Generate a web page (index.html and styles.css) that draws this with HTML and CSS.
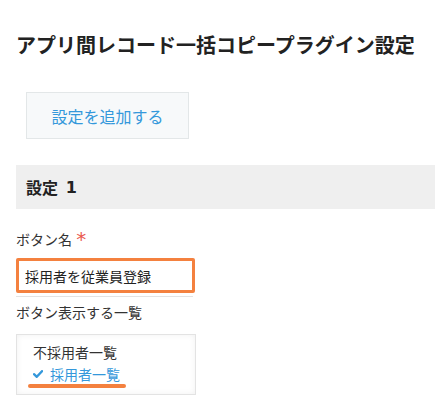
FILE: index.html
```html
<!DOCTYPE html>
<html lang="ja">
<head>
<meta charset="utf-8">
<link rel="stylesheet" href="styles.css">
</head>
<body>
<div class="page">
  <h1 class="title">アプリ間レコード一括コピープラグイン設定</h1>
  <button class="add-btn" type="button">設定を追加する</button>
  <div class="section-head">設定 <span class="num">1</span></div>
  <div class="field-label">ボタン名 <span class="req">*</span></div>
  <div class="input-wrap">
    <div class="input-box">採用者を従業員登録</div>
  </div>
  <div class="field-label label2">ボタン表示する一覧</div>
  <div class="list-box">
    <div class="list-item">不採用者一覧</div>
    <div class="list-item selected">
      <svg class="check" width="10" height="8" viewBox="0 0 10 8"><path d="M1 4.2 L3.8 6.8 L9 1.2" fill="none" stroke="#3498db" stroke-width="2.4" stroke-linecap="round" stroke-linejoin="round"/></svg>
      <span>採用者一覧</span>
    </div>
    <div class="mark-line"></div>
  </div>
</div>
</body>
</html>
```

FILE: styles.css
```css
html, body {
  margin: 0;
  padding: 0;
  background: #fff;
}
body {
  font-family: "Noto Sans CJK JP", "Noto Sans", sans-serif;
  color: #333;
}
.page {
  padding-left: 16px;
}
.title {
  margin: 31px 0 0 0;
  font-size: 20px;
  line-height: 28px;
  font-weight: bold;
  color: #222;
  white-space: nowrap;
}
.add-btn {
  display: block;
  margin: 33px 0 0 10px;
  width: 163px;
  height: 47px;
  background: #f7f9fa;
  border: 1px solid #e3e7e8;
  color: #3498db;
  font-family: inherit;
  font-size: 16px;
  padding: 0;
  box-sizing: border-box;
}
.section-head {
  margin-top: 26px;
  height: 44px;
  background: #efefef;
  padding-left: 10px;
  display: flex;
  align-items: center;
  font-size: 16px;
  font-weight: bold;
  color: #222;
  white-space: pre;
}
.section-head .num {
  font-family: "DejaVu Sans", sans-serif;
  margin-left: 4px;
}
.field-label {
  margin-top: 19px;
  font-size: 14px;
  line-height: 20px;
  height: 20px;
  color: #333;
}
.req {
  font-family: "DejaVu Sans", sans-serif;
  color: #ea5a4e;
  font-size: 20px;
  line-height: 20px;
  position: relative;
  top: 1px;
  margin-left: 1px;
}
.input-wrap {
  margin-top: 10px;
  width: 177px;
  border-bottom: 1px solid #e3e3e3;
  padding-bottom: 3px;
}
.input-box {
  width: 179px;
  height: 35px;
  box-sizing: border-box;
  border: 3px solid #f4813f;
  border-radius: 2px;
  padding-left: 6px;
  display: flex;
  align-items: center;
  font-size: 14px;
  color: #222;
}
.label2 {
  margin-top: 5px;
}
.list-box {
  position: relative;
  margin-top: 12px;
  width: 180px;
  height: 61px;
  box-sizing: border-box;
  border: 1px solid #e3e3e3;
  box-shadow: inset 0 0 6px rgba(0, 0, 0, 0.06);
  padding: 6px 0 0 16px;
}
.list-item {
  font-size: 14px;
  line-height: 22px;
  color: #333;
  display: flex;
  align-items: center;
}
.list-item.selected {
  color: #3498db;
}
.check {
  margin-right: 7px;
}
.mark-line {
  position: absolute;
  left: 11px;
  top: 49px;
  width: 98px;
  height: 4px;
  border-radius: 2px;
  background: #f4813f;
}
```
